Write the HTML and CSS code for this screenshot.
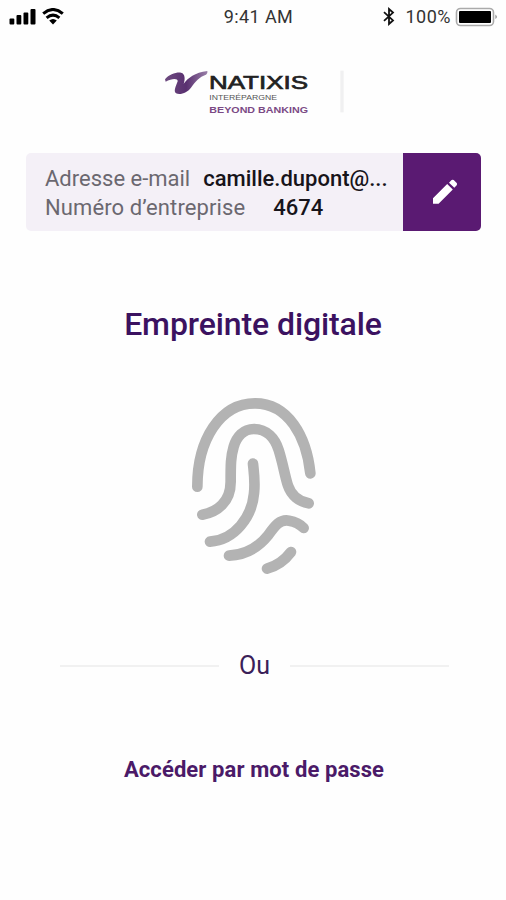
FILE: index.html
```
<!DOCTYPE html>
<html lang="fr">
<head>
  <meta charset="UTF-8" />
  <meta name="viewport" content="width=device-width, initial-scale=1.0" />
  <title>Empreinte digitale</title>
  <link rel="stylesheet" href="styles.css">
</head>
<body>
  <div class="status-bar">
    <div class="status-left">
      <svg class="signal" width="28" height="17" viewBox="0 0 28 17">
        <rect x="0.5" y="10.5" width="4.8" height="6" rx="1" />
        <rect x="7.5" y="7" width="4.8" height="9.5" rx="1" />
        <rect x="14.5" y="4.5" width="4.8" height="12" rx="1" />
        <rect x="21.5" y="1" width="5" height="15.5" rx="1" />
      </svg>
      <svg class="wifi" width="22" height="17" viewBox="0 0 22 17">
        <path d="M1.2 5.6Q11 -2.6 20.8 5.6M4.6 9.9Q11 4.4 17.4 9.9" fill="none" stroke="#000" stroke-width="3" />
        <path d="M7.2 12.6Q11 9.6 14.8 12.6L11 16.4Z" />
      </svg>
    </div>
    <span class="time">9:41 AM</span>
    <div class="status-right">
      <svg width="12" height="19" viewBox="0 0 12 19">
        <path d="M1 5.2L10 13.4L6 17V2L10 5.6L1 13.8" fill="none" stroke="#111" stroke-width="1.8" />
      </svg>
      <span class="percent">100%</span>
      <svg width="43" height="20" viewBox="0 0 43 20">
        <rect x="1.5" y="1.5" width="37" height="17" rx="4" fill="#fff" stroke="#aaa" stroke-width="1.6" />
        <rect x="4" y="4" width="32" height="12" rx="1" />
        <path d="M40.5 7.5Q43 9.8 40.5 12Z" fill="#777" />
      </svg>
    </div>
  </div>

  <header class="brand">
    <svg width="200" height="65" viewBox="0 0 600 195">
      <defs>
        <linearGradient id="swoosh" x1="0" y1="0" x2="1" y2="0">
          <stop offset="0" stop-color="#6e4b80" />
          <stop offset="0.5" stop-color="#593070" />
          <stop offset="1" stop-color="#9a80a8" />
        </linearGradient>
      </defs>
      <path d="M30 58C42 43 64 36 78 38C92 41 90 61 86 71C98 55 120 37 157 33C158 38 156 42 153 44C133 51 121 64 109 82C97 100 74 106 63 100C54 94 64 76 68 64C69 54 50 55 32 65Z" fill="url(#swoosh)" />
      <text class="logo-name" x="162" y="86" textLength="297" lengthAdjust="spacingAndGlyphs">NATIXIS</text>
      <text class="logo-sub" x="163" y="119" textLength="203" lengthAdjust="spacingAndGlyphs">INTERÉPARGNE</text>
      <text class="logo-tag" x="163" y="158" textLength="296" lengthAdjust="spacingAndGlyphs">BEYOND BANKING</text>
      <rect x="556" y="32" width="10" height="125" fill="#f0f0f1" />
    </svg>
  </header>

  <section class="account">
    <div class="account-info">
      <p><span class="label">Adresse e-mail</span><b class="email">camille.dupont@...</b></p>
      <p><span class="label company">Numéro d’entreprise</span><b class="number">4674</b></p>
    </div>
    <button class="edit" type="button" aria-label="Modifier">
      <svg width="26" height="26" viewBox="0 0 26 26">
        <path d="M1 19.2L15.2 5L20.8 10.6L6.6 24.8H1ZM17 3.7L19.6 1.1Q20.6 0.4 21.7 1.1L24.7 4.1Q25.5 5.2 24.7 6.2L22.3 8.8Z" fill="#fff" />
      </svg>
    </button>
  </section>

  <h1>Empreinte digitale</h1>

  <svg class="fingerprint" width="150" height="200" viewBox="0 0 450 600">
    <path d="M52 305C52 165 120 55 225 55C325 55 380 155 391 265" />
    <path d="M67 389C110 382 152 352 152 290C152 240 152 215 161 185C170 155 190 132 222 132C260 132 285 160 296 195C309 236 315 275 324 302C334 332 358 350 386 355" />
    <path d="M219 236C222 266 226 290 222 325C216 395 165 465 90 470" />
    <path d="M147 512C195 510 235 488 265 450C285 422 300 402 327 407C345 410 360 417 371 429" />
    <path d="M261 551C290 543 315 525 333 501" />
  </svg>

  <div class="divider">
    <span>Ou</span>
  </div>

  <a class="password-link" href="#">Accéder par mot de passe</a>
</body>
</html>
```
FILE: styles.css
```
* {
  margin: 0;
  padding: 0;
  box-sizing: border-box;
}

body {
  height: 900px;
  background: #fefefe;
  font-family: Roboto, sans-serif;
  display: flex;
  flex-direction: column;
  overflow: hidden;
}

.status-bar {
  height: 33px;
  padding: 0 8px 0 9px;
  display: grid;
  grid-template-columns: 1fr auto 1fr;
  align-items: center;
}

.status-left,
.status-right {
  display: flex;
  align-items: center;
}

.status-left {
  gap: 5px;
}

.status-right {
  justify-content: flex-end;
}

.time,
.percent {
  color: #333;
  font-size: 18px;
}

.time {
  padding-left: 10px;
  letter-spacing: 0.4px;
}

.percent {
  margin: 0 4px 0 10px;
  letter-spacing: 0.5px;
}

.brand {
  height: 65px;
  margin: 27px 0 28px 155px;
}

.logo-name {
  font: 55px "Liberation Sans", sans-serif;
  fill: #222;
  stroke: #222;
  stroke-width: 2px;
}

.logo-sub {
  font: 19px "Liberation Sans", sans-serif;
  fill: #555;
}

.logo-tag {
  font: bold 29px "Liberation Sans", sans-serif;
  fill: #7b4a85;
}

.account {
  height: 78px;
  margin: 0 25px 0 26px;
  border-radius: 5px;
  background: #f4f0f7;
  display: flex;
  overflow: hidden;
}

.account-info {
  flex: 1;
  padding: 12px 0 0 19px;
  font-size: 22px;
  line-height: 28.5px;
  white-space: nowrap;
}

.label {
  color: #6b6870;
}

.company {
  letter-spacing: 0.1px;
}

.account-info b {
  color: #17141a;
  font-weight: 500;
}

.email {
  margin-left: 13px;
}

.number {
  margin-left: 28px;
}

.edit {
  width: 78px;
  border: none;
  background: #5a1a72;
  display: flex;
  justify-content: center;
  align-items: center;
  padding-left: 6px;
  cursor: pointer;
}

h1 {
  margin-top: 72px;
  color: #3b1260;
  font-size: 32px;
  font-weight: 500;
  line-height: 42px;
  letter-spacing: -0.1px;
  text-align: center;
}

.fingerprint {
  margin: 40px 0 0 180px;
  fill: none;
  stroke: #b3b3b3;
  stroke-width: 32;
  stroke-linecap: round;
}

.divider {
  margin: 65px 57px 0 60px;
  display: flex;
  align-items: center;
  gap: 20px;
  color: #3a2058;
  font-size: 25px;
  line-height: 32px;
}

.divider::before,
.divider::after {
  content: "";
  flex: 1;
  height: 2px;
  background: #f1f1f1;
}

.password-link {
  margin-top: 73px;
  padding-left: 2px;
  color: #4b1a68;
  font-size: 22px;
  font-weight: 700;
  line-height: 30px;
  letter-spacing: 0.1px;
  text-align: center;
  text-decoration: none;
}
```
